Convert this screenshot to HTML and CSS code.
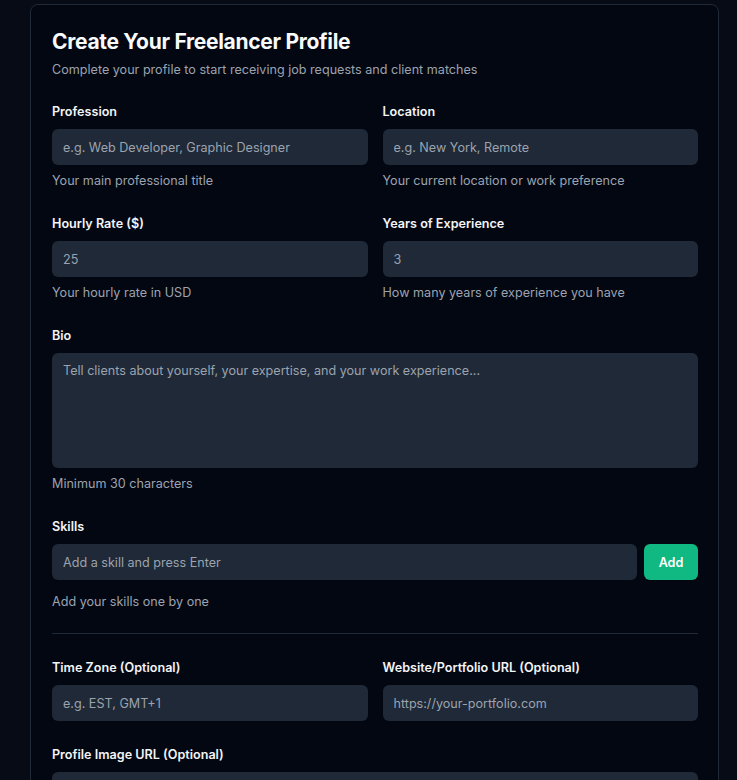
FILE: index.html
```html
<!DOCTYPE html>
<html lang="en">
<head>
<meta charset="utf-8">
<title>Create Your Freelancer Profile</title>
<link rel="stylesheet" href="styles.css">
</head>
<body>
<main class="page">
  <section class="card">
    <h1 class="title">Create Your Freelancer Profile</h1>
    <p class="subtitle">Complete your profile to start receiving job requests and client matches</p>

    <form class="form">
      <div class="grid">
        <div class="field">
          <label class="label">Profession</label>
          <input class="input" type="text" placeholder="e.g. Web Developer, Graphic Designer">
          <p class="hint">Your main professional title</p>
        </div>
        <div class="field">
          <label class="label">Location</label>
          <input class="input" type="text" placeholder="e.g. New York, Remote">
          <p class="hint">Your current location or work preference</p>
        </div>
      </div>

      <div class="grid">
        <div class="field">
          <label class="label">Hourly Rate ($)</label>
          <input class="input" type="text" placeholder="25">
          <p class="hint">Your hourly rate in USD</p>
        </div>
        <div class="field">
          <label class="label">Years of Experience</label>
          <input class="input" type="text" placeholder="3">
          <p class="hint">How many years of experience you have</p>
        </div>
      </div>

      <div class="field">
        <label class="label">Bio</label>
        <textarea class="input textarea" placeholder="Tell clients about yourself, your expertise, and your work experience..."></textarea>
        <p class="hint">Minimum 30 characters</p>
      </div>

      <div class="field">
        <label class="label">Skills</label>
        <div class="skill-row">
          <input class="input" type="text" placeholder="Add a skill and press Enter">
          <button class="btn-add" type="button">Add</button>
        </div>
        <p class="hint hint-skills">Add your skills one by one</p>
      </div>

      <hr class="divider">

      <div class="grid">
        <div class="field">
          <label class="label">Time Zone (Optional)</label>
          <input class="input" type="text" placeholder="e.g. EST, GMT+1">
        </div>
        <div class="field">
          <label class="label">Website/Portfolio URL (Optional)</label>
          <input class="input" type="text" placeholder="https://your-portfolio.com">
        </div>
      </div>

      <div class="field">
        <label class="label">Profile Image URL (Optional)</label>
        <input class="input" type="text" placeholder="">
      </div>
    </form>
  </section>
</main>
</body>
</html>
```

FILE: styles.css
```css
* { box-sizing: border-box; }

html, body {
  margin: 0;
  padding: 0;
  background: #060b16;
  font-family: Inter, "Noto Sans", "Liberation Sans", sans-serif;
  color: #f3f4f6;
}

.page {
  padding: 4px 18px 0 30px;
}

.card {
  background: #030712;
  border: 1px solid #1f2937;
  border-radius: 8px;
  padding: 22px 20px 40px 21px;
}

.title {
  margin: 0;
  font-size: 21px;
  line-height: 30px;
  font-weight: 700;
  letter-spacing: -0.3px;
  color: #f9fafb;
}

.subtitle {
  margin: 3px 0 0;
  font-size: 12.6px;
  line-height: 20px;
  color: #9ca3af;
}

.form {
  margin-top: 21px;
  display: flex;
  flex-direction: column;
  gap: 23px;
}

.grid {
  display: grid;
  grid-template-columns: 1fr 1fr;
  column-gap: 15px;
}

.field {
  display: flex;
  flex-direction: column;
}

.label {
  padding-top: 1px;
  font-size: 12.6px;
  line-height: 20px;
  font-weight: 600;
  color: #f3f4f6;
  margin-bottom: 7px;
}

.input {
  display: block;
  width: 100%;
  height: 36px;
  border: none;
  outline: none;
  border-radius: 6px;
  background: #1f2937;
  padding: 0 11px;
  font-family: inherit;
  font-size: 12.6px;
  color: #e5e7eb;
}

.input::placeholder {
  color: #9ca3af;
  opacity: 1;
}

.textarea {
  height: 115px;
  padding: 8px 11px;
  resize: none;
  line-height: 20px;
}

.hint {
  margin: 6px 0 -1px;
  font-size: 12.6px;
  line-height: 20px;
  color: #9ca3af;
}

.hint-skills {
  margin-top: 12px;
}

.skill-row {
  display: flex;
  gap: 7px;
}

.skill-row .input {
  flex: 1;
}

.btn-add {
  flex: none;
  width: 54px;
  height: 36px;
  border: none;
  border-radius: 6px;
  background: #10b981;
  color: #ffffff;
  font-family: inherit;
  font-size: 12.6px;
  font-weight: 600;
}

.divider {
  border: none;
  border-top: 1px solid #1f2937;
  margin: -1px 0 0;
}
```
